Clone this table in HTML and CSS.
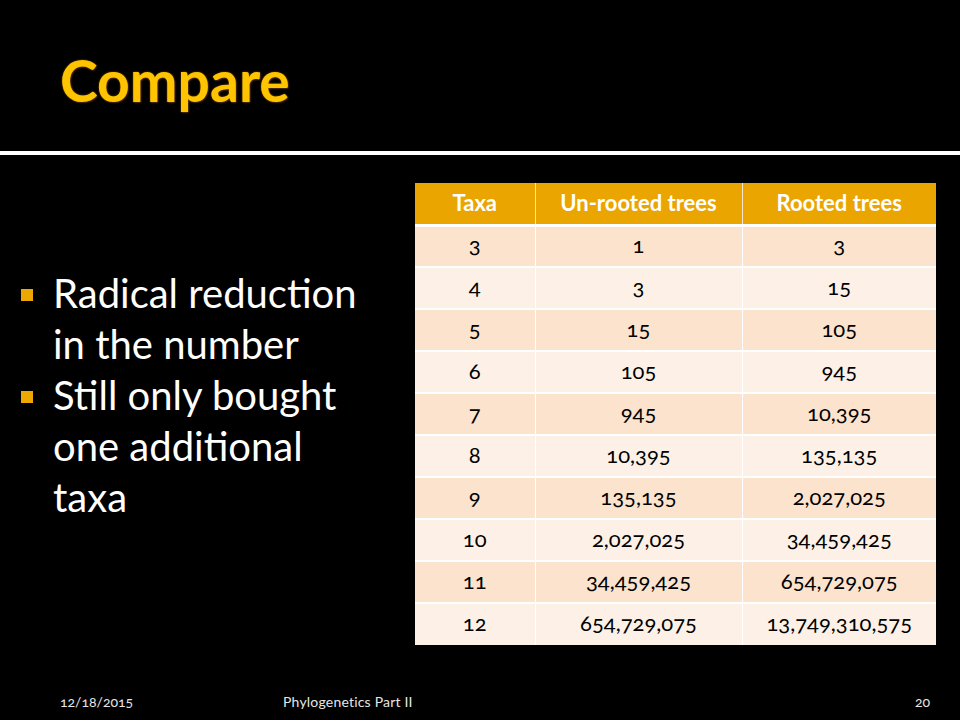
FILE: index.html
```html
<!DOCTYPE html>
<html>
<head>
<meta charset="utf-8">
<link rel="stylesheet" href="styles.css">
</head>
<body>
<div class="slide">
  <header class="title-area">
    <h1 class="title">Compare</h1>
  </header>
  <div class="rule"></div>
  <main class="content">
    <section class="left">
      <ul class="bullets">
        <li>Radical reduction in the number</li>
        <li>Still only bought one additional taxa</li>
      </ul>
    </section>
    <section class="right">
      <table class="data">
        <colgroup>
          <col class="c1"><col class="c2"><col class="c3">
        </colgroup>
        <thead>
          <tr><th>Taxa</th><th>Un-rooted trees</th><th>Rooted trees</th></tr>
        </thead>
        <tbody>
          <tr><td>3</td><td>1</td><td>3</td></tr>
          <tr><td>4</td><td>3</td><td>15</td></tr>
          <tr><td>5</td><td>15</td><td>105</td></tr>
          <tr><td>6</td><td>105</td><td>945</td></tr>
          <tr><td>7</td><td>945</td><td>10,395</td></tr>
          <tr><td>8</td><td>10,395</td><td>135,135</td></tr>
          <tr><td>9</td><td>135,135</td><td>2,027,025</td></tr>
          <tr><td>10</td><td>2,027,025</td><td>34,459,425</td></tr>
          <tr><td>11</td><td>34,459,425</td><td>654,729,075</td></tr>
          <tr><td>12</td><td>654,729,075</td><td>13,749,310,575</td></tr>
        </tbody>
      </table>
    </section>
  </main>
  <footer class="footer">
    <span class="f-date">12/18/2015</span>
    <span class="f-title">Phylogenetics Part II</span>
    <span class="f-num">20</span>
  </footer>
</div>
</body>
</html>
```
FILE: styles.css
```css
html, body {
  margin: 0;
  padding: 0;
  background: #000;
}
.slide {
  width: 960px;
  height: 720px;
  background: #000;
  display: flex;
  flex-direction: column;
  font-family: Lato, "Liberation Sans", sans-serif;
  color: #fff;
  overflow: hidden;
}
.title-area {
  height: 151px;
  box-sizing: border-box;
  padding: 52px 0 0 60px;
}
.title {
  margin: 0;
  font-size: 57px;
  line-height: 57px;
  font-weight: 700;
  color: #ffc400;
  text-shadow: 0 0 2px rgba(170, 100, 0, 0.8), 1px 1px 2px rgba(90, 50, 0, 0.6);
}
.rule {
  height: 4px;
  background: #fff;
}
.content {
  flex: 1;
  display: flex;
}
.left {
  width: 415px;
  box-sizing: border-box;
  padding: 113px 0 0 0;
}
.bullets {
  list-style: none;
  margin: 0;
  padding: 0 0 0 53px;
  width: 320px;
  font-size: 40px;
  line-height: 51px;
}
.bullets li {
  position: relative;
}
.bullets li::before {
  content: "";
  position: absolute;
  left: -32px;
  top: 21px;
  width: 12px;
  height: 12px;
  background: #eca800;
}
.right {
  padding-top: 28px;
}
.data {
  border-collapse: collapse;
  width: 521px;
  table-layout: fixed;
  font-variant-numeric: oldstyle-nums;
}
.c1 { width: 120px; }
.c2 { width: 207px; }
.c3 { width: 194px; }
.data th {
  background: #eba500;
  color: #fff;
  font-weight: 700;
  font-size: 22px;
  height: 42px;
  box-sizing: border-box;
  padding: 0 0 2px 0;
  border-left: 1px solid #fbe3ce;
  border-bottom: 3px solid #fff;
  text-align: center;
  vertical-align: middle;
}
.data th:first-child { border-left: none; }
.data td {
  color: #000;
  font-size: 22px;
  height: 42px;
  padding: 0 0 4px 0;
  box-sizing: border-box;
  text-align: center;
  vertical-align: middle;
  border-left: 1px solid #fff;
  border-bottom: 2px solid #fff;
}
.data td:first-child { border-left: none; }
.data tbody tr:nth-child(odd) td { background: #fbe3ce; }
.data tbody tr:nth-child(even) td { background: #fdf1e7; }
.data tbody tr:last-child td { border-bottom: none; }
.footer {
  height: 27px;
  display: flex;
  align-items: flex-start;
  padding-left: 60px;
  font-size: 14px;
  line-height: 18px;
  color: #e6e6e6;
  font-variant-numeric: oldstyle-nums;
}
.f-date { width: 223px; }
.f-title { letter-spacing: 0.2px; }
.f-num { margin-left: auto; padding-right: 30px; }
```
